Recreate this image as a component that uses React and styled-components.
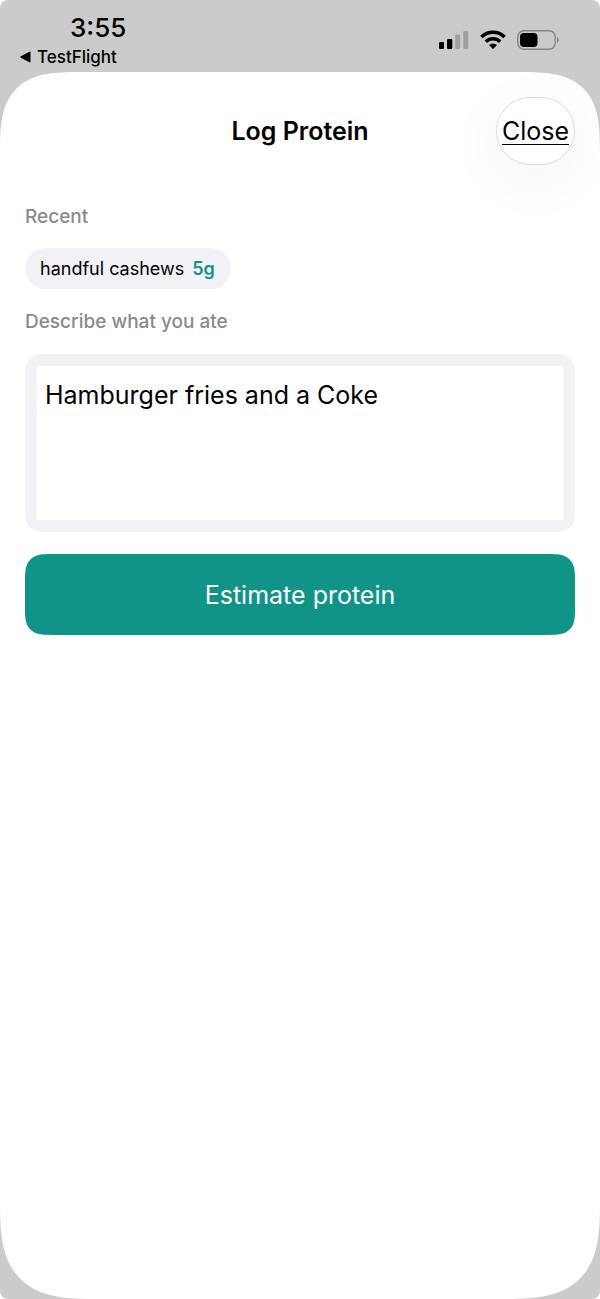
import React from "react";
import styled, { createGlobalStyle } from "styled-components";

const GlobalStyle = createGlobalStyle`
  *, *::before, *::after { box-sizing: border-box; }
  body { margin: 0; background: #fff; }
  button, textarea { font: inherit; color: inherit; }
`;

const Screen = styled.div`
  display: flex;
  flex-direction: column;
  min-height: 100vh;
  background: #cbcbcb;
  border-radius: 8px;
  color: #000;
  font-family: Inter, "Liberation Sans", sans-serif;
`;

const StatusBar = styled.header`
  display: flex;
  justify-content: space-between;
  height: 72px;
  padding: 12px 40px 0 20px;
`;

const StatusLeft = styled.div`
  display: flex;
  flex-direction: column;
`;

const Time = styled.time`
  padding-left: 50px;
  font-size: 26px;
  line-height: 32px;
  font-weight: 500;
`;

const BackLink = styled.a`
  display: flex;
  align-items: center;
  gap: 6px;
  color: inherit;
  font-size: 17px;
  line-height: 26px;
  font-weight: 500;
  text-decoration: none;
`;

const StatusIcons = styled.div`
  display: flex;
  align-items: center;
  gap: 10px;
  height: 56px;
`;

const Sheet = styled.main`
  flex: 1;
  padding: 25px 25px 0;
  background: #fff;
  border-radius: 62px 62px 76px 76px;

  @supports (corner-shape: superellipse(1.58)) {
    border-radius: 80px 80px 98px 98px;
    corner-shape: superellipse(1.58);
  }
`;

const TitleBar = styled.div`
  display: grid;
  grid-template-columns: 1fr auto 1fr;
  align-items: center;
  margin-bottom: 38px;
`;

const Title = styled.h1`
  grid-column: 2;
  margin: 0;
  font-size: 25px;
  line-height: 32px;
  font-weight: 600;
`;

const CloseButton = styled.button`
  justify-self: end;
  width: 79px;
  height: 68px;
  padding: 0;
  border: 1px solid #dcdcdc;
  border-radius: 34px;
  background: #fff;
  box-shadow: 0 14px 56px 6px rgba(0, 0, 0, 0.04);
  font-size: 25px;
  line-height: 32px;
  text-decoration: underline;
  text-decoration-thickness: 1px;
  text-underline-offset: 4px;
`;

const Label = styled.label`
  display: block;
  color: #8a8a8a;
  font-size: 19px;
  line-height: 28px;
  font-weight: 500;
`;

const SectionLabel = styled(Label).attrs({ as: "h2" })`
  margin: 0;
`;

const Chips = styled.div`
  display: flex;
  flex-wrap: wrap;
  gap: 12px;
  margin: 17px 0 19px;
`;

const Chip = styled.button`
  display: flex;
  align-items: center;
  gap: 8px;
  height: 41px;
  padding: 0 16px 0 15px;
  border: 0;
  border-radius: 21px;
  background: #f2f1f6;
  font-size: 18px;
  line-height: 24px;
`;

const Grams = styled.span`
  color: #119488;
  font-weight: 600;
`;

const MealInput = styled.textarea`
  display: block;
  width: 100%;
  height: 154px;
  padding: 13px 8px;
  border: 0;
  background: #fff;
  font-size: 25px;
  line-height: 32px;
  resize: none;
  outline: none;
`;

const InputFrame = styled.div`
  margin: 18px 0 22px;
  padding: 12px;
  border-radius: 16px;
  background: #f2f1f6;
`;

const SubmitButton = styled.button`
  display: block;
  width: 100%;
  height: 81px;
  border: 0;
  border-radius: 20px;
  background: #119488;
  color: #fff;
  font-size: 25px;
  line-height: 32px;

  @supports (corner-shape: superellipse(1.58)) {
    border-radius: 26px;
    corner-shape: superellipse(1.58);
  }
`;

const BackArrow = () => (
  <svg width="11" height="12" viewBox="0 0 11 12" aria-hidden="true">
    <path d="M10.5 1.3v9.4q0 1-1 .6L.8 6.7q-1-.7 0-1.4L9.5.7q1-.4 1 .6z" />
  </svg>
);

const SignalIcon = () => (
  <svg width="31" height="20" viewBox="0 0 31 20" aria-hidden="true">
    <rect x="0" y="12" width="5" height="7" rx="1.3" />
    <rect x="8" y="9" width="5.3" height="10" rx="1.3" />
    <rect x="16.2" y="4.5" width="5" height="14.5" rx="1.3" fill="#a0a0a0" />
    <rect x="24.3" y="1" width="5" height="18" rx="1.3" fill="#a0a0a0" />
  </svg>
);

const WifiIcon = () => (
  <svg width="27" height="20" viewBox="0 0 27 20" aria-hidden="true">
    <g fill="none" stroke="#000" strokeWidth="3.5">
      <path d="M1.4 7a16.3 16.3 0 0 1 23.2 0" />
      <path d="M5.8 11.7a10.3 10.3 0 0 1 14.4 0" />
    </g>
    <path d="M9 15a6 6 0 0 1 8 0l-3.4 3.6q-.6.6-1.2 0z" />
  </svg>
);

const BatteryIcon = () => (
  <svg width="43" height="20" viewBox="0 0 43 20" aria-hidden="true">
    <rect x="0.8" y="0.8" width="37.4" height="18.4" rx="6" fill="none" stroke="#858585" strokeWidth="1.4" />
    <rect x="3" y="3" width="17.5" height="14" rx="4" />
    <path d="M40 7q2 1 2 3t-2 3z" fill="#858585" />
  </svg>
);

export default function App() {
  return (
    <Screen>
      <GlobalStyle />
      <StatusBar>
        <StatusLeft>
          <Time>3:55</Time>
          <BackLink href="#testflight">
            <BackArrow />
            TestFlight
          </BackLink>
        </StatusLeft>
        <StatusIcons>
          <SignalIcon />
          <WifiIcon />
          <BatteryIcon />
        </StatusIcons>
      </StatusBar>
      <Sheet>
        <TitleBar>
          <Title>Log Protein</Title>
          <CloseButton type="button">Close</CloseButton>
        </TitleBar>
        <SectionLabel>Recent</SectionLabel>
        <Chips>
          <Chip type="button">
            handful cashews <Grams>5g</Grams>
          </Chip>
        </Chips>
        <Label htmlFor="meal">Describe what you ate</Label>
        <InputFrame>
          <MealInput id="meal" defaultValue="Hamburger fries and a Coke" spellCheck={false} />
        </InputFrame>
        <SubmitButton type="button">Estimate protein</SubmitButton>
      </Sheet>
    </Screen>
  );
}
